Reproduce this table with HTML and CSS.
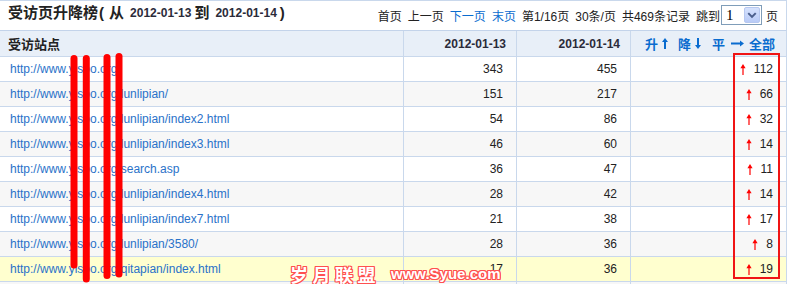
FILE: index.html
```html
<!DOCTYPE html>
<html lang="zh-CN">
<head>
<meta charset="utf-8">
<title>受访页升降榜</title>
<link rel="stylesheet" href="styles.css">
</head>
<body>
<div class="page">
  <div class="topbar">
    <h1 class="title">受访页升降榜<span class="paren">(</span><span class="from">从</span><b class="date">2012-01-13</b><span class="to">到</span><b class="date">2012-01-14</b><span class="paren close">)</span></h1>
    <div class="pager">
      <span class="item">首页</span>
      <span class="item">上一页</span>
      <a class="item link" href="#">下一页</a>
      <a class="item link" href="#">末页</a>
      <span class="item">第1/16页</span>
      <span class="item">30条/页</span>
      <span class="item">共469条记录</span>
      <span class="item">跳到</span>
      <span class="select"><span class="val">1</span><span class="btn"><svg width="15" height="16" viewBox="0 0 15 16"><polyline points="3.5,6 7.5,10 11.5,6" fill="none" stroke="#4b5f8c" stroke-width="2.2"/></svg></span></span>
      <span class="item unit">页</span>
    </div>
  </div>

  <div class="row head">
    <div class="cell c1">受访站点</div>
    <div class="cell num">2012-01-13</div>
    <div class="cell num">2012-01-14</div>
    <div class="cell c4">
      <span class="h">升</span><svg class="ha up" width="6" height="11" viewBox="0 0 6 11"><path d="M3 0 L6 4 L4 4 L4 11 L2 11 L2 4 L0 4 Z" fill="#0a6ccf"/></svg>
      <span class="h gap">降</span><svg class="ha down" width="6" height="11" viewBox="0 0 6 11"><path d="M3 11 L6 7 L4 7 L4 0 L2 0 L2 7 L0 7 Z" fill="#0a6ccf"/></svg>
      <span class="h gap2">平</span><svg class="ha right" width="13" height="7" viewBox="0 0 13 7"><path d="M13 3.5 L9 0.5 L9 2.5 L0 2.5 L0 4.5 L9 4.5 L9 6.5 Z" fill="#0a6ccf"/></svg>
      <span class="h all">全部</span>
    </div>
  </div>

  <div class="row">
    <div class="cell c1"><a href="#">http://www.yisoo.org/</a></div>
    <div class="cell num">343</div><div class="cell num">455</div>
    <div class="cell c4 diff"><svg class="ar" width="6" height="11" viewBox="0 0 6 11"><path d="M3 0 L5.6 4.2 L3.6 4.2 L3.6 11 L2.4 11 L2.4 4.2 L0.4 4.2 Z" fill="#f00"/></svg>112</div>
  </div>
  <div class="row alt">
    <div class="cell c1"><a href="#">http://www.yisoo.org/lunlipian/</a></div>
    <div class="cell num">151</div><div class="cell num">217</div>
    <div class="cell c4 diff"><svg class="ar" width="6" height="11" viewBox="0 0 6 11"><path d="M3 0 L5.6 4.2 L3.6 4.2 L3.6 11 L2.4 11 L2.4 4.2 L0.4 4.2 Z" fill="#f00"/></svg>66</div>
  </div>
  <div class="row">
    <div class="cell c1"><a href="#">http://www.yisoo.org/lunlipian/index2.html</a></div>
    <div class="cell num">54</div><div class="cell num">86</div>
    <div class="cell c4 diff"><svg class="ar" width="6" height="11" viewBox="0 0 6 11"><path d="M3 0 L5.6 4.2 L3.6 4.2 L3.6 11 L2.4 11 L2.4 4.2 L0.4 4.2 Z" fill="#f00"/></svg>32</div>
  </div>
  <div class="row alt">
    <div class="cell c1"><a href="#">http://www.yisoo.org/lunlipian/index3.html</a></div>
    <div class="cell num">46</div><div class="cell num">60</div>
    <div class="cell c4 diff"><svg class="ar" width="6" height="11" viewBox="0 0 6 11"><path d="M3 0 L5.6 4.2 L3.6 4.2 L3.6 11 L2.4 11 L2.4 4.2 L0.4 4.2 Z" fill="#f00"/></svg>14</div>
  </div>
  <div class="row">
    <div class="cell c1"><a href="#">http://www.yisoo.org/search.asp</a></div>
    <div class="cell num">36</div><div class="cell num">47</div>
    <div class="cell c4 diff"><svg class="ar" width="6" height="11" viewBox="0 0 6 11"><path d="M3 0 L5.6 4.2 L3.6 4.2 L3.6 11 L2.4 11 L2.4 4.2 L0.4 4.2 Z" fill="#f00"/></svg>11</div>
  </div>
  <div class="row alt">
    <div class="cell c1"><a href="#">http://www.yisoo.org/lunlipian/index4.html</a></div>
    <div class="cell num">28</div><div class="cell num">42</div>
    <div class="cell c4 diff"><svg class="ar" width="6" height="11" viewBox="0 0 6 11"><path d="M3 0 L5.6 4.2 L3.6 4.2 L3.6 11 L2.4 11 L2.4 4.2 L0.4 4.2 Z" fill="#f00"/></svg>14</div>
  </div>
  <div class="row">
    <div class="cell c1"><a href="#">http://www.yisoo.org/lunlipian/index7.html</a></div>
    <div class="cell num">21</div><div class="cell num">38</div>
    <div class="cell c4 diff"><svg class="ar" width="6" height="11" viewBox="0 0 6 11"><path d="M3 0 L5.6 4.2 L3.6 4.2 L3.6 11 L2.4 11 L2.4 4.2 L0.4 4.2 Z" fill="#f00"/></svg>17</div>
  </div>
  <div class="row alt">
    <div class="cell c1"><a href="#">http://www.yisoo.org/lunlipian/3580/</a></div>
    <div class="cell num">28</div><div class="cell num">36</div>
    <div class="cell c4 diff"><svg class="ar" width="6" height="11" viewBox="0 0 6 11"><path d="M3 0 L5.6 4.2 L3.6 4.2 L3.6 11 L2.4 11 L2.4 4.2 L0.4 4.2 Z" fill="#f00"/></svg>8</div>
  </div>
  <div class="row hover">
    <div class="cell c1"><a href="#">http://www.yisoo.org/qitapian/index.html</a></div>
    <div class="cell num">17</div><div class="cell num">36</div>
    <div class="cell c4 diff"><svg class="ar" width="6" height="11" viewBox="0 0 6 11"><path d="M3 0 L5.6 4.2 L3.6 4.2 L3.6 11 L2.4 11 L2.4 4.2 L0.4 4.2 Z" fill="#f00"/></svg>19</div>
  </div>
  <div class="row alt tail">
    <div class="cell c1"></div>
    <div class="cell num"></div><div class="cell num"></div>
    <div class="cell c4"></div>
  </div>

  <div class="mark-box"></div>
  <svg class="strokes" width="789" height="284" viewBox="0 0 789 284">
    <g stroke="#ff0000" stroke-width="7" stroke-linecap="round" fill="none">
      <line x1="74" y1="58.5" x2="74" y2="265"/>
      <line x1="86.3" y1="58.5" x2="86.3" y2="279"/>
      <line x1="107" y1="57.5" x2="107" y2="275.5"/>
      <line x1="119" y1="56.5" x2="119" y2="274"/>
    </g>
  </svg>
  <div class="watermark"><span class="wm-cn">岁月联盟</span><span class="wm-en">www.Syue.com</span></div>
</div>
</body>
</html>
```

FILE: styles.css
```css
html, body {
  margin: 0;
  padding: 0;
  overflow: hidden;
  background: #ffffff;
}

.page {
  position: relative;
  width: 787px;
  height: 284px;
  overflow: hidden;
  font-family: "Liberation Sans", "Noto Sans CJK SC", sans-serif;
  font-size: 12px;
  color: #222;
}

.topbar {
  display: flex;
  justify-content: space-between;
  align-items: flex-start;
  height: 29px;
  border-top: 1px solid #c9d8ec;
  border-right: 1px solid #c9d8ec;
  border-bottom: 1px solid #c3d3ea;
}

.title {
  margin: 0;
  padding: 3px 0 0 8px;
  font-size: 15px;
  line-height: 18px;
  font-weight: bold;
  color: #222;
  display: flex;
  align-items: center;
  white-space: nowrap;
}

.title .paren {
  font-size: 15px;
  margin-left: 1px;
}

.title .from {
  margin-left: 5px;
}

.title .date {
  font-size: 12px;
  margin-left: 6px;
  color: #2b2b3a;
}

.title .to {
  margin-left: 3px;
}

.title .close {
  margin-left: 3px;
}

.pager {
  display: flex;
  align-items: flex-end;
  padding: 4px 8px 0 0;
  white-space: nowrap;
}

.pager .item {
  line-height: 16px;
  margin-left: 6px;
  color: #222;
  text-decoration: none;
}

.pager .link {
  color: #0a6ccf;
}

.pager .unit {
  margin-left: 4px;
}

.select {
  margin-left: 1px;
  box-sizing: border-box;
  width: 41px;
  height: 20px;
  border: 1px solid #7f9db9;
  background: #fff;
  display: flex;
  align-items: center;
  justify-content: space-between;
  padding: 1px 1px 1px 4px;
}

.select .val {
  font-family: "Liberation Serif", serif;
  font-size: 15px;
  line-height: 16px;
  color: #000;
}

.select .btn {
  box-sizing: border-box;
  width: 16px;
  height: 16px;
  border: 1px solid #b7c8f0;
  border-radius: 2px;
  background: linear-gradient(#d6e2fd, #b9cbf7);
  display: flex;
  align-items: center;
  justify-content: center;
}

.select .btn svg {
  display: block;
}

.row {
  display: grid;
  grid-template-columns: 404px 113px 114px 156px;
  background: #ffffff;
}

.row.alt {
  background: #f7f7f7;
}

.row.hover {
  background: #ffffcf;
}

.row.head {
  background: #e8eff8;
}

.cell {
  box-sizing: border-box;
  height: 25px;
  border-right: 1px solid #c9d8ec;
  border-bottom: 1px solid #c9d8ec;
  display: flex;
  align-items: center;
  white-space: nowrap;
  overflow: hidden;
}

.head .cell {
  height: 26px;
  font-weight: bold;
}

.c1 {
  padding-left: 10px;
}

.head .c1 {
  padding-left: 8px;
  font-size: 13px;
}

.c1 a {
  color: #2a72c9;
  text-decoration: none;
}

.num {
  justify-content: flex-end;
  padding-right: 13px;
}

.head .num {
  padding-right: 10px;
  font-size: 12px;
  color: #2b2b3a;
}

.c4 {
  justify-content: flex-end;
  padding-right: 13px;
}

.head .c4 {
  padding-right: 11px;
  color: #0a6ccf;
  font-size: 13px;
}

.head .ha {
  display: block;
  margin-left: 4px;
}

.head .gap {
  margin-left: 10px;
}

.head .gap2 {
  margin-left: 11px;
}

.head .right {
  margin-left: 6px;
}

.head .all {
  margin-left: 5px;
}

.diff .ar {
  display: block;
  margin-right: 8px;
}

.mark-box {
  position: absolute;
  left: 733px;
  top: 53px;
  width: 47px;
  height: 226px;
  box-sizing: border-box;
  border: 2px solid #f01414;
  pointer-events: none;
}

.strokes {
  position: absolute;
  left: 0;
  top: 0;
  pointer-events: none;
}

.watermark {
  position: absolute;
  left: 290px;
  top: 263px;
  display: flex;
  align-items: center;
  color: #fff;
  font-weight: bold;
  pointer-events: none;
  text-shadow: 1px 0 #ff5050, -1px 0 #ff5050, 0 1px #ff5050, 0 -1px #ff5050,
    1px 1px #ff5050, -1px -1px #ff5050, 1px -1px #ff5050, -1px 1px #ff5050;
}

.wm-cn {
  font-family: "Noto Sans CJK SC", sans-serif;
  font-size: 18px;
  line-height: 22px;
  letter-spacing: 4.5px;
}

.wm-en {
  margin-left: 11px;
  font-family: "Liberation Sans", sans-serif;
  font-size: 15px;
  line-height: 22px;
}
```
